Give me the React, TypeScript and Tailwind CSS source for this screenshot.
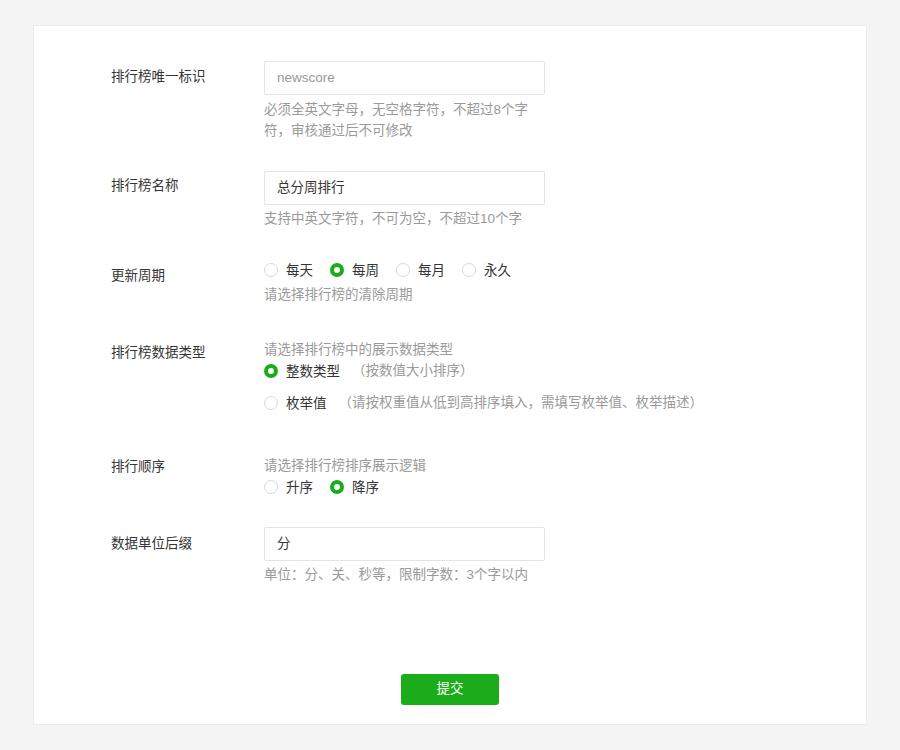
import React, { useState } from 'react';

const font = { fontFamily: '"Liberation Sans", "Noto Sans CJK SC", sans-serif' };

const Radio: React.FC<{ checked: boolean; label: string; onClick: () => void }> = ({ checked, label, onClick }) => (
  <button type="button" onClick={onClick} className="flex items-center gap-2 text-[13.5px] leading-[21px] text-[#353535]">
    <span
      className={
        checked
          ? 'w-[14px] h-[14px] rounded-full border-[4px] border-[#1aad19] bg-white'
          : 'w-[14px] h-[14px] rounded-full border border-[#d9d9d9] bg-white'
      }
    />
    <span>{label}</span>
  </button>
);

const Field: React.FC<{ label: string; labelTop: string; children: React.ReactNode; className?: string }> = ({
  label,
  labelTop,
  children,
  className,
}) => (
  <div className={`flex ${className ?? ''}`}>
    <div className={`w-[153px] shrink-0 text-[13.5px] text-[#353535] leading-[21px] ${labelTop}`}>{label}</div>
    <div className="flex-1">{children}</div>
  </div>
);

const Input: React.FC<{ value: string; placeholder?: boolean }> = ({ value, placeholder }) => (
  <div
    className={`w-[281px] h-[34px] border border-[#e4e4e4] rounded-[2px] px-3 flex items-center text-[13.5px] ${
      placeholder ? 'text-[#999999]' : 'text-[#353535]'
    }`}
  >
    {value}
  </div>
);

export default function App() {
  const [period, setPeriod] = useState('每周');
  const [dataType, setDataType] = useState('int');
  const [order, setOrder] = useState('desc');

  return (
    <div className="min-h-[750px] bg-[#f4f4f4] pt-[25px] pb-[25px] px-[33px]" style={font}>
      <div className="bg-white border border-[#ececec] pl-[77px] pt-[35px] pb-[19px]">
        <Field label="排行榜唯一标识" labelTop="pt-[5px]">
          <Input value="newscore" placeholder />
          <p className="mt-[4px] w-[275px] text-[13.5px] leading-[21px] text-[#9a9a9a]">
            必须全英文字母，无空格字符，不超过8个字符，审核通过后不可修改
          </p>
        </Field>

        <Field label="排行榜名称" labelTop="pt-[4px]" className="mt-[30px]">
          <Input value="总分周排行" />
          <p className="mt-[3px] text-[13.5px] leading-[21px] text-[#9a9a9a]">支持中英文字符，不可为空，不超过10个字</p>
        </Field>

        <Field label="更新周期" labelTop="pt-[6px]" className="mt-[30px]">
          <div className="flex items-center gap-[17px] h-[22px]">
            {['每天', '每周', '每月', '永久'].map((p) => (
              <Radio key={p} label={p} checked={period === p} onClick={() => setPeriod(p)} />
            ))}
          </div>
          <p className="mt-[3px] text-[13.5px] leading-[21px] text-[#9a9a9a]">请选择排行榜的清除周期</p>
        </Field>

        <Field label="排行榜数据类型" labelTop="pt-[3px]" className="mt-[34px]">
          <p className="text-[13.5px] leading-[21px] text-[#9a9a9a]">请选择排行榜中的展示数据类型</p>
          <div className="flex items-center h-[22px]">
            <Radio label="整数类型" checked={dataType === 'int'} onClick={() => setDataType('int')} />
            <span className="ml-[12px] text-[13.5px] text-[#9a9a9a]">（按数值大小排序）</span>
          </div>
          <div className="flex items-center h-[22px] mt-[10px]">
            <Radio label="枚举值" checked={dataType === 'enum'} onClick={() => setDataType('enum')} />
            <span className="ml-[12px] text-[13.5px] text-[#9a9a9a]">（请按权重值从低到高排序填入，需填写枚举值、枚举描述）</span>
          </div>
        </Field>

        <Field label="排行顺序" labelTop="pt-[1px]" className="mt-[41px]">
          <p className="text-[13.5px] leading-[21px] text-[#9a9a9a]">请选择排行榜排序展示逻辑</p>
          <div className="flex items-center gap-[17px] h-[22px]">
            <Radio label="升序" checked={order === 'asc'} onClick={() => setOrder('asc')} />
            <Radio label="降序" checked={order === 'desc'} onClick={() => setOrder('desc')} />
          </div>
        </Field>

        <Field label="数据单位后缀" labelTop="pt-[6px]" className="mt-[29px]">
          <Input value="分" />
          <p className="mt-[3px] text-[13.5px] leading-[21px] text-[#9a9a9a]">单位：分、关、秒等，限制字数：3个字以内</p>
        </Field>

        <div className="flex justify-center mt-[89px] -ml-[77px]">
          <button className="w-[98px] h-[31px] rounded-[3px] bg-[#1aad19] text-white text-[13.5px]">提交</button>
        </div>
      </div>
    </div>
  );
}
